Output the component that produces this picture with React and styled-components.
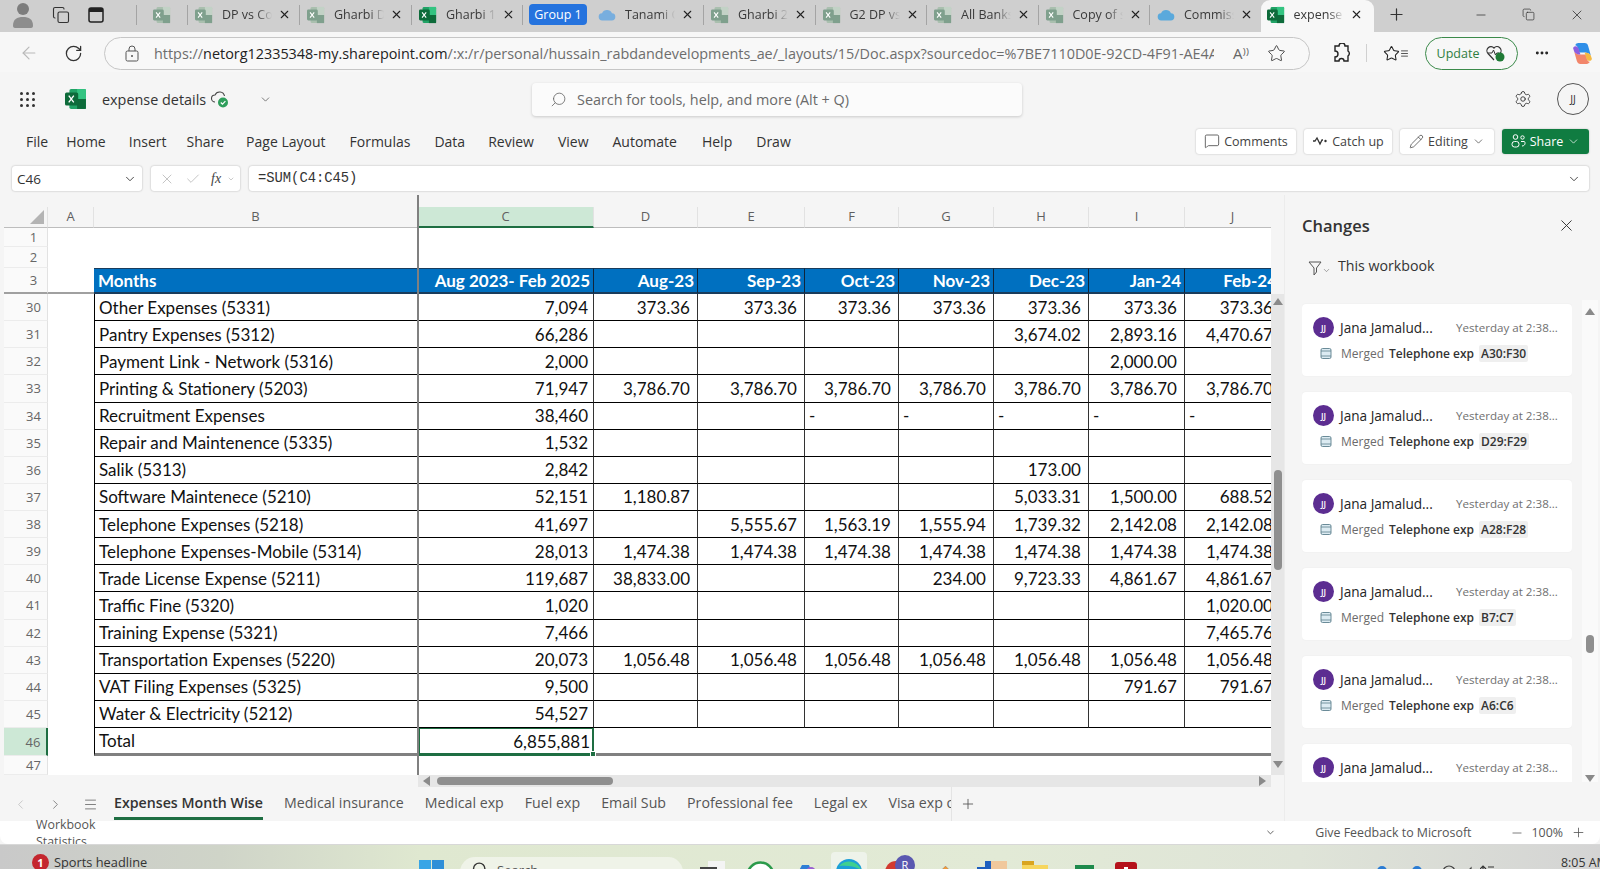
import React from "react";
import styled, { createGlobalStyle } from "styled-components";
import {
  ArrowLeft,
  RotateCw,
  Star,
  Settings,
  X,
  Plus,
  Minus,
  ChevronDown,
  ChevronLeft,
  ChevronRight,
  MessageSquare,
  Pencil,
  Search,
  Menu,
  Copy,
  MoreHorizontal,
  Check,
} from "lucide-react";

const GlobalStyle = createGlobalStyle`
  html, body {
    margin: 0;
    padding: 0;
    background: #f5f5f5;
  }
  * {
    box-sizing: border-box;
  }
  body {
    font-family: "Open Sans", "Noto Sans", sans-serif;
    color: #242424;
  }
`;

const Page = styled.div`
  width: 1600px;
  height: 869px;
  overflow: hidden;
  display: flex;
  flex-direction: column;
`;

/* browser tab strip */
const TabStrip = styled.div`
  height: 32px;
  flex: none;
  display: flex;
  align-items: center;
  background: #cfcfcf;
  padding-bottom: 3px;
`;

const StripTools = styled.div`
  width: 137px;
  flex: none;
  display: flex;
  align-items: center;
  color: #333;
  height: 20px;
  border-right: 1px solid #a4a4a4;
`;

const ProfileDot = styled.svg`
  width: 24px;
  height: 28px;
  margin-left: 11px;
  margin-right: 17px;
`;

const TabBox = styled.svg`
  width: 18px;
  height: 18px;
  margin-left: 17px;
`;

const Tab = styled.div`
  width: ${(p) => p.$w || 111.5}px;
  flex: none;
  height: 20px;
  display: flex;
  align-items: center;
  padding-left: ${(p) => p.$pad || 7}px;
  border-right: ${(p) => (p.$noLine ? "none" : "1px solid #a4a4a4")};
  font-size: 12.5px;
  color: #3a3a3a;
`;

const ActiveTab = styled.div`
  width: 113px;
  flex: none;
  height: 32px;
  margin-bottom: -3px;
  margin-left: -1px;
  display: flex;
  align-items: center;
  padding: 0 0 3px 6px;
  background: #f7f7f7;
  border-radius: 9px 9px 0 0;
  font-size: 12.5px;
  color: #3a3a3a;
`;

const TabTitle = styled.span`
  width: 50px;
  margin-left: 9px;
  overflow: hidden;
  white-space: nowrap;
  -webkit-mask-image: linear-gradient(to right, #000 70%, transparent 100%);
  mask-image: linear-gradient(to right, #000 70%, transparent 100%);
`;

const TabClose = styled(X)`
  width: 13px;
  height: 13px;
  margin-left: 6px;
  color: #222;
  flex: none;
`;

const TabGroup = styled.div`
  position: relative;
  display: flex;
  align-items: center;
  flex: none;
`;

const GroupLine = styled.div`
  position: absolute;
  top: -6px;
  left: 6px;
  right: 8px;
  height: 2px;
  background: #2b6fd6;
`;

const GroupPill = styled.div`
  width: 58px;
  height: 21px;
  margin: 0 4px 0 6px;
  border-radius: 4px;
  background: #2573de;
  color: #fff;
  font-size: 12.5px;
  line-height: 21px;
  text-align: center;
`;

const NewTab = styled(Plus)`
  width: 19px;
  height: 19px;
  margin-left: 13px;
  color: #333;
`;

const WindowButtons = styled.div`
  margin-left: auto;
  display: flex;
  align-items: center;
  gap: 34px;
  padding-right: 15px;
  color: #333;
`;

/* address bar */
const AddressRow = styled.div`
  height: 40px;
  flex: none;
  display: flex;
  align-items: center;
  background: #f7f7f7;
  padding: 2px 0 0 19px;
  color: #333;
`;

const UrlPill = styled.div`
  width: 1206px;
  height: 33px;
  margin-left: 21px;
  border: 1px solid #c6c6c6;
  border-radius: 17px;
  display: flex;
  align-items: center;
  padding: 0 14px 0 20px;
  background: #f8f8f8;
`;

const UrlText = styled.div`
  margin-left: 15px;
  font-size: 14.4px;
  color: #6d6d6d;
  white-space: nowrap;
  width: 1060px;
  overflow: hidden;

  b {
    font-weight: 400;
    color: #222;
  }
`;

const ReadAloud = styled.span`
  margin-left: 19px;
  font-size: 15px;
  color: #666;
  width: 22px;
`;

const BarIcons = styled.div`
  display: flex;
  align-items: center;
  margin-left: 23px;
`;

const BarDivider = styled.div`
  width: 1px;
  height: 18px;
  background: #d0d0d0;
  margin: 0 16px 0 15px;
`;

const UpdatePill = styled.div`
  width: 93px;
  height: 33px;
  margin-left: 16px;
  border: 1px solid #3b8a4a;
  border-radius: 17px;
  display: flex;
  align-items: center;
  justify-content: center;
  gap: 7px;
  font-size: 12.5px;
  color: #2f7d3f;
`;

/* excel header */
const AppHeader = styled.div`
  height: 48px;
  flex: none;
  display: flex;
  align-items: center;
  position: relative;
  padding: 6px 0 0 20px;
  font-size: 14.5px;
`;

const Waffle = styled.div`
  display: grid;
  grid-template-columns: repeat(3, 3px);
  gap: 3px;
  margin-right: 30px;

  i {
    width: 3px;
    height: 3px;
    background: #333;
    border-radius: 50%;
  }
`;

const DocName = styled.span`
  margin-left: 15px;
  width: 107px;
  white-space: nowrap;
  font-size: 14.4px;
  color: #333;
`;

const SearchBox = styled.div`
  position: absolute;
  left: 532px;
  top: 11px;
  width: 490px;
  height: 33px;
  background: #fbfbfb;
  border-radius: 4px;
  box-shadow: 0 1px 3px rgba(0, 0, 0, 0.18);
  display: flex;
  align-items: center;
  gap: 10px;
  padding-left: 18px;
  font-size: 14.4px;
  color: #6a6a6a;
`;

const HeaderRight = styled.div`
  margin-left: auto;
  display: flex;
  align-items: center;
  gap: 25px;
  padding-right: 11px;
`;

const Persona = styled.div`
  width: 32px;
  height: 32px;
  border: 1px solid #555;
  border-radius: 50%;
  font-size: 10.5px;
  color: #333;
  display: flex;
  align-items: center;
  justify-content: center;
`;

/* ribbon tabs */
const MenuRow = styled.div`
  height: 40px;
  flex: none;
  display: flex;
  align-items: center;
  padding: 2px 11px 0 26px;
  font-size: 14px;
  color: #333;
`;

const MenuItem = styled.span`
  margin-right: ${(p) => p.$gap}px;
`;

const RibbonButtons = styled.div`
  margin-left: auto;
  display: flex;
  gap: 8px;
`;

const RibbonButton = styled.div`
  width: ${(p) => p.$w}px;
  height: 25px;
  display: flex;
  align-items: center;
  justify-content: center;
  gap: 4px;
  border-radius: 3px;
  font-size: 12.5px;
  background: ${(p) => (p.$primary ? "#107c41" : "#fff")};
  color: ${(p) => (p.$primary ? "#fff" : "#424242")};
  box-shadow: 0 0 2px rgba(0, 0, 0, 0.25);
`;

/* formula bar */
const FormulaRow = styled.div`
  height: 25px;
  margin-top: 6px;
  flex: none;
  display: flex;
  padding: 0 11px 0 12px;
  gap: 9px;
`;

const Field = styled.div`
  width: ${(p) => (p.$w ? `${p.$w}px` : "auto")};
  flex: ${(p) => (p.$w ? "none" : "1")};
  height: 25px;
  background: #fff;
  border-radius: 3px;
  box-shadow: 0 0 2px rgba(0, 0, 0, 0.3);
  display: flex;
  align-items: center;
  padding: 0 5px;
  font-size: 13.5px;
  color: #333;
  justify-content: space-between;
`;

const FormulaText = styled.span`
  font-family: "Liberation Mono", monospace;
  font-size: 13.8px;
  padding-left: 4px;
`;

const FxButtons = styled.div`
  display: flex;
  align-items: center;
  gap: 10px;
  padding-left: 3px;
  color: #b5b5b5;
`;

const Fx = styled.span`
  font-family: "Liberation Serif", serif;
  font-style: italic;
  color: #444;
  font-size: 14px;
`;

/* work area */
const WorkArea = styled.div`
  display: flex;
  height: 626px;
  margin-top: 4px;
  flex: none;
`;

const SheetColumn = styled.div`
  width: 1284px;
  flex: none;
  display: flex;
  flex-direction: column;
`;

const GridWrap = styled.div`
  height: 580px;
  display: flex;
  flex: none;
`;

const Sheet = styled.div`
  position: relative;
  width: 1271px;
  height: 580px;
  overflow: hidden;
  padding-top: 12px;
  flex: none;
`;

const FreezeLine = styled.div`
  position: absolute;
  left: 417px;
  top: 0;
  bottom: 0;
  width: 2px;
  background: #808080;
`;

const Columns = "44px 46px 324px 176px 104px 107px 94px 95px 95px 96px 96px";

const Row = styled.div`
  display: grid;
  grid-template-columns: ${Columns};
  width: 1277px;
  margin-left: 4px;
  height: ${(p) => p.$h}px;
  background: #fff;
`;

const HeaderRow = styled(Row)`
  background: #f5f5f5;
  margin-left: 0;
  padding-left: 4px;
  width: 1281px;
`;

const ColHead = styled.div`
  font-size: 13px;
  color: #5f5f5f;
  text-align: center;
  line-height: 19px;
  border-right: 1px solid #e2e2e2;
  border-bottom: ${(p) => (p.$on ? "2px solid #1e6e42" : "1px solid #bdbdbd")};
  background: ${(p) => (p.$on ? "#cde8d6" : "transparent")};
  position: relative;
`;

const Corner = styled.svg`
  position: absolute;
  right: 3px;
  bottom: 3px;
  width: 14px;
  height: 14px;
`;

const RowHead = styled.div`
  font-size: 13px;
  color: #666;
  display: flex;
  align-items: center;
  justify-content: center;
  padding-left: 16px;
  background: ${(p) => (p.$on ? "#cde8d6" : "#fafafa")};
  border-right: ${(p) => (p.$on ? "2px solid #1e6e42" : "1px solid #e2e2e2")};
  border-bottom: ${(p) => (p.$freeze ? "2px solid #a0a0a0" : "1px solid #ececec")};
`;

const BlankCell = styled.div`
  border-bottom: ${(p) => (p.$freeze ? "2px solid #a0a0a0" : "none")};
`;

const Banner = styled.div`
  background: #0070c0;
  color: #fff;
  font-family: Lato, "Open Sans", sans-serif;
  font-weight: 700;
  font-size: 17px;
  white-space: nowrap;
  display: flex;
  align-items: flex-end;
  justify-content: ${(p) => (p.$left ? "flex-start" : "flex-end")};
  padding: 0 3px 1px 4px;
  border-top: 1px solid #1a3c5c;
  border-bottom: 2px solid #1a3c5c;
  border-right: 1px solid #10253a;
`;

const Cell = styled.div`
  font-family: Lato, "Open Sans", sans-serif;
  font-size: 17px;
  color: #111;
  white-space: nowrap;
  display: flex;
  align-items: center;
  justify-content: ${(p) => (p.$right ? "flex-end" : "flex-start")};
  padding: ${(p) => (p.$right ? `0 ${p.$pad}px 0 0` : "0 0 0 4px")};
  border-right: 1px solid #333;
  border-bottom: 1px solid #000;
`;

const LabelCell = styled(Cell)`
  border-left: 1px solid #000;
`;

const TotalCell = styled(Cell)`
  border-right: ${(p) => (p.$open ? "none" : "1px solid #333")};
  border-bottom: 3px solid #808080;
`;

const SelectedCell = styled(Cell)`
  position: relative;
  border: 2px solid #1e6e42;
  border-top-width: 1px;
  border-bottom-width: 3px;
  padding-right: 2px;
`;

const Handle = styled.div`
  position: absolute;
  right: -4px;
  bottom: -4px;
  width: 6px;
  height: 6px;
  background: #1e6e42;
  border: 1px solid #fff;
`;

const VScroll = styled.div`
  width: 13px;
  flex: none;
  margin-top: 99px;
  background: #e6e6e6;
  display: flex;
  flex-direction: column;
  align-items: center;
  padding-top: 4px;
`;

const Arrow = styled.div`
  width: 0;
  height: 0;
  border-left: 5px solid transparent;
  border-right: 5px solid transparent;
  border-${(p) => (p.$down ? "top" : "bottom")}: 7px solid #8a8a8a;
`;

const VThumb = styled.div`
  width: 8px;
  height: 100px;
  margin: 165px 0 191px;
  border-radius: 4px;
  background: #8f8f8f;
`;

const HScroll = styled.div`
  height: 12px;
  flex: none;
  margin-left: 418px;
  width: 853px;
  background: #e6e6e6;
  display: flex;
  align-items: center;
  padding: 0 5px;
`;

const SideArrow = styled.div`
  width: 0;
  height: 0;
  border-top: 5px solid transparent;
  border-bottom: 5px solid transparent;
  border-${(p) => (p.$right ? "left" : "right")}: 7px solid #8a8a8a;
  margin-left: ${(p) => (p.$right ? "auto" : "0")};
`;

const HThumb = styled.div`
  width: 176px;
  height: 8px;
  margin-left: 7px;
  border-radius: 4px;
  background: #8f8f8f;
`;

const SheetTabs = styled.div`
  flex: 1;
  display: flex;
  align-items: stretch;
  font-size: 14.2px;
  color: #555;
`;

const TabNav = styled.div`
  width: 114px;
  flex: none;
  display: flex;
  align-items: center;
  padding-left: 13px;
  gap: 20px;
  color: #666;
`;

const TabsClip = styled.div`
  width: 838px;
  flex: none;
  display: flex;
  gap: 21px;
  overflow: hidden;
  white-space: nowrap;
  border-right: 1px solid #e4e4e4;
`;

const SheetTab = styled.div`
  flex: none;
  line-height: 32px;
  height: 33px;
  font-weight: ${(p) => (p.$active ? 600 : 400)};
  color: ${(p) => (p.$active ? "#333" : "#555")};
  border-bottom: ${(p) => (p.$active ? "3px solid #1e6e42" : "none")};
`;

const AddSheet = styled(Plus)`
  width: 16px;
  height: 16px;
  align-self: center;
  margin-left: 8px;
  color: #555;
`;

/* changes pane */
const Pane = styled.aside`
  width: 316px;
  flex: none;
  border-left: 1px solid #ececec;
  padding: 15px 0 0 17px;
  display: flex;
  flex-direction: column;
`;

const PaneTitle = styled.div`
  display: flex;
  justify-content: space-between;
  align-items: center;
  padding-right: 24px;
  font-size: 16.5px;
  font-weight: 600;
  color: #333;
  height: 30px;
`;

const FilterRow = styled.div`
  display: flex;
  align-items: center;
  height: 24px;
  margin: 16px 0 0 6px;
  font-size: 14.2px;
  color: #333;
`;

const FilterLabel = styled.span`
  margin-left: 7px;
  padding-bottom: 6px;
  font-weight: 500;
`;

const PaneBody = styled.div`
  margin-top: 26px;
  height: 482px;
  display: flex;
  gap: 10px;
  margin-top: 20px;
`;

const CardList = styled.div`
  width: 270px;
  flex: none;
  height: 482px;
  overflow: hidden;
  padding-top: 4px;
`;

const Card = styled.div`
  height: 72px;
  margin-bottom: 16px;
  padding: 13px 13px 0 11px;
  background: #fff;
  border-radius: 4px;
  box-shadow: 0 0 2px rgba(0, 0, 0, 0.06);
`;

const CardHead = styled.div`
  display: flex;
  align-items: center;
  height: 21px;
`;

const Avatar = styled.div`
  width: 21px;
  height: 21px;
  border-radius: 50%;
  background: #5c2d91;
  color: #fff;
  font-size: 8.5px;
  font-weight: 600;
  display: flex;
  align-items: center;
  justify-content: center;
  flex: none;
`;

const Author = styled.span`
  margin-left: 6px;
  font-size: 13.6px;
  color: #242424;
  width: 116px;
  white-space: nowrap;
  font-weight: 500;
`;

const When = styled.span`
  font-size: 11.6px;
  color: #707070;
  white-space: nowrap;
`;

const CardLine = styled.div`
  display: flex;
  align-items: center;
  margin-top: 6px;
  padding-left: 7px;
  height: 18px;
  font-size: 12px;
  white-space: nowrap;
  color: #6b6b6b;
`;

const MergeIcon = styled.svg`
  width: 12px;
  height: 13px;
  margin-right: 9px;
  flex: none;
`;

const SheetName = styled.b`
  font-weight: 600;
  color: #333;
  margin: 0 5px 0 5px;
`;

const RangeChip = styled.span`
  background: #efefef;
  color: #333;
  font-weight: 600;
  padding: 0 2px;
  border-radius: 2px;
`;

const PaneScroll = styled.div`
  width: 16px;
  flex: none;
  height: 482px;
  background: #fafafa;
  display: flex;
  flex-direction: column;
  align-items: center;
  padding-top: 8px;
`;

const PaneThumb = styled.div`
  width: 8px;
  height: 18px;
  margin: 320px 0 122px;
  border-radius: 4px;
  background: #8f8f8f;
`;

/* status bar */
const StatusBar = styled.div`
  height: 23px;
  flex: none;
  background: #fff;
  border-radius: 0 0 8px 8px;
  display: flex;
  align-items: center;
  padding: 0 14px 0 36px;
  font-size: 12.4px;
  color: #555;
`;

const StatusCaret = styled(ChevronDown)`
  width: 11px;
  height: 11px;
  margin-left: 1116px;
  color: #555;
`;

const Feedback = styled.span`
  margin-left: 39px;
  width: 195px;
`;

const Zoom = styled.div`
  display: flex;
  align-items: center;
  gap: 8px;
`;

/* windows taskbar */
const Taskbar = styled.div`
  flex: 1;
  border-top: 1px solid #d8d8d8;
  overflow: hidden;
  display: flex;
  align-items: flex-start;
  background: linear-gradient(
    to right,
    #c9c9c9 0,
    #cfd4c8 220px,
    #dfe8d0 420px,
    #e2ead6 1000px,
    #dfe4d8 1300px,
    #d4d4d4 1600px
  );
`;

const Headline = styled.div`
  position: relative;
  width: 419px;
  flex: none;
  padding: 8px 0 0 54px;
  font-size: 12.8px;
  color: #333;
  white-space: nowrap;
`;

const Badge = styled.div`
  position: absolute;
  left: 32px;
  top: 9px;
  width: 17px;
  height: 17px;
  border-radius: 50%;
  background: #c4262e;
  color: #fff;
  font-size: 11px;
  font-weight: 700;
  text-align: center;
  line-height: 17px;
`;

const TaskIcon = styled.svg`
  flex: none;
  width: ${(p) => p.$w}px;
  height: 30px;
  margin-left: ${(p) => p.$ml}px;
  margin-top: ${(p) => p.$mt}px;
`;

const TaskSearch = styled.div`
  flex: none;
  width: 223px;
  height: 30px;
  margin: 12px 0 0 16px;
  border-radius: 15px;
  background: #eff3e8;
  display: flex;
  align-items: flex-start;
  position: relative;
  padding: 4px 0 0 10px;
  gap: 10px;
  font-size: 13px;
  color: #555;
`;

const Clock = styled.div`
  margin-left: 67px;
  padding-top: 9px;
  font-size: 12.4px;
  color: #333;
  white-space: nowrap;
`;

function XlIcon({ faded, size = 18 }) {
  const main = faded ? "#a9bfae" : "#21a366";
  const dark = faded ? "#7fa08d" : "#0d6b3a";
  return (
    <svg width={size} height={size} viewBox="0 0 20 20" style={{ flex: "none" }}>
      <rect x="4" y="1" width="15" height="18" rx="1.5" fill={main} />
      <rect x="11" y="1" width="8" height="9" fill={faded ? "#c2d2c6" : "#33c481"} />
      <rect x="11" y="10" width="8" height="9" fill={dark} />
      <rect x="0" y="4" width="12" height="12" rx="1.5" fill={dark} />
      <path d="M3.4 7l4.6 6M8 7l-4.6 6" stroke="#fff" strokeWidth="1.2" />
    </svg>
  );
}

function CloudIcon({ color = "#78aede" }) {
  return (
    <svg width="18" height="18" viewBox="0 0 20 20" style={{ flex: "none" }}>
      <path d="M5 16a4 4 0 0 1-.5-8A6 6 0 0 1 15.5 8 4 4 0 0 1 15 16z" fill={color} />
    </svg>
  );
}

function CopilotIcon() {
  return (
    <svg width="25" height="25" viewBox="0 0 24 24" style={{ marginLeft: 20 }}>
      <path d="M8 2h6c2 0 3 1 3.500 3L20 14c-2-3-5-3-7-3H9L8 8C7.500 5 6 4 5 4c.7-1.300 1.600-2 3-2z" fill="#2f8fe8" />
      <path d="M16 22h-6c-2 0-3-1-3.500-3L4 10c2 3 5 3 7 3h4l1 3c.5 3 2 4 3 4-.7 1.300-1.600 2-3 2z" fill="#f2866b" />
      <path d="M5 5c2 0 3 1 3.500 3L10 13c-3 0-5-1-6-3L3 7c0-1 1-2 2-2z" fill="#8d5fe0" />
      <path d="M19 19c-2 0-3-1-3.500-3L14 11c3 0 5 1 6 3l1 3c0 1-1 2-2 2z" fill="#f5b942" />
    </svg>
  );
}

function SyncedIcon() {
  return (
    <svg width="20" height="20" viewBox="0 0 20 20" style={{ marginLeft: 1 }}>
      <path d="M5 13a3.500 3.500 0 0 1 0-7 5 5 0 0 1 9.500 1" fill="none" stroke="#444" strokeWidth="1.100" />
      <circle cx="13" cy="13.500" r="5" fill="#2e9e5b" />
      <path d="M10.800 13.500l1.700 1.700 2.900-3" fill="none" stroke="#fff" strokeWidth="1.200" />
    </svg>
  );
}

const menu = [
  ["File", 18],
  ["Home", 23],
  ["Insert", 20],
  ["Share", 22],
  ["Page Layout", 24],
  ["Formulas", 24],
  ["Data", 23],
  ["Review", 24],
  ["View", 24],
  ["Automate", 25],
  ["Help", 24],
  ["Draw", 0],
];

const headers = ["Aug 2023- Feb 2025", "Aug-23", "Sep-23", "Oct-23", "Nov-23", "Dec-23", "Jan-24", "Feb-24"];

const all = (v) => [v, v, v, v, v, v, v];
const rows = [
  [30, "Other Expenses (5331)", "7,094", all("373.36")],
  [31, "Pantry Expenses (5312)", "66,286", ["", "", "", "", "3,674.02", "2,893.16", "4,470.67"]],
  [32, "Payment Link - Network (5316)", "2,000", ["", "", "", "", "", "2,000.00", ""]],
  [33, "Printing & Stationery (5203)", "71,947", all("3,786.70")],
  [34, "Recruitment Expenses", "38,460", ["", "", "-", "-", "-", "-", "-"]],
  [35, "Repair and Maintenence (5335)", "1,532", ["", "", "", "", "", "", ""]],
  [36, "Salik (5313)", "2,842", ["", "", "", "", "173.00", "", ""]],
  [37, "Software Maintenece (5210)", "52,151", ["1,180.87", "", "", "", "5,033.31", "1,500.00", "688.52"]],
  [38, "Telephone Expenses (5218)", "41,697", ["", "5,555.67", "1,563.19", "1,555.94", "1,739.32", "2,142.08", "2,142.08"]],
  [39, "Telephone Expenses-Mobile (5314)", "28,013", all("1,474.38")],
  [40, "Trade License Expense (5211)", "119,687", ["38,833.00", "", "", "234.00", "9,723.33", "4,861.67", "4,861.67"]],
  [41, "Traffic Fine (5320)", "1,020", ["", "", "", "", "", "", "1,020.00"]],
  [42, "Training Expense (5321)", "7,466", ["", "", "", "", "", "", "7,465.76"]],
  [43, "Transportation Expenses (5220)", "20,073", all("1,056.48")],
  [44, "VAT Filing Expenses (5325)", "9,500", ["", "", "", "", "", "791.67", "791.67"]],
  [45, "Water & Electricity (5212)", "54,527", ["", "", "", "", "", "", ""]],
];

const changes = ["A30:F30", "D29:F29", "A28:F28", "B7:C7", "A6:C6"];
const sheets = ["Expenses Month Wise", "Medical insurance", "Medical exp", "Fuel exp", "Email Sub", "Professional fee", "Legal ex", "Visa exp other"];

export default function App() {
  return (
    <Page>
      <GlobalStyle />
      <TabStrip>
        <StripTools>
          <ProfileDot viewBox="0 0 24 28">
            <circle cx="12" cy="8" r="6" fill="#7d7d7d" />
            <path d="M2 25c0-7 4-9 10-9s10 2 10 9c0 1-1 2-2 2H4c-1 0-2-1-2-2z" fill="#8d8d8d" />
          </ProfileDot>
          <Copy size={18} strokeWidth={1.5} />
          <TabBox viewBox="0 0 18 18">
            <rect x="2" y="2" width="14" height="14" rx="2" fill="none" stroke="#222" strokeWidth="1.500" />
            <rect x="2" y="2" width="14" height="4" fill="#222" />
          </TabBox>
        </StripTools>
        <Tab $w={51} $pad={16}>
          <XlIcon faded />
        </Tab>
        {["DP vs Compare", "Gharbi Details"].map((t) => (
          <Tab key={t} $w={112}>
            <XlIcon faded />
            <TabTitle>{t}</TabTitle>
            <TabClose />
          </Tab>
        ))}
        <Tab $w={111}>
          <XlIcon />
          <TabTitle>Gharbi 1 sheet</TabTitle>
          <TabClose />
        </Tab>
        <TabGroup>
          <GroupLine />
          <GroupPill>Group 1</GroupPill>
          <Tab $w={113}>
            <CloudIcon />
            <TabTitle>Tanami Cost</TabTitle>
            <TabClose />
          </Tab>
        </TabGroup>
        {["Gharbi 2 sheet", "G2 DP vs Cost", "All Banks data", "Copy of sheet"].map((t) => (
          <Tab key={t}>
            <XlIcon faded />
            <TabTitle>{t}</TabTitle>
            <TabClose />
          </Tab>
        ))}
        <Tab $noLine>
          <CloudIcon color="#5aa9dc" />
          <TabTitle>Commission</TabTitle>
          <TabClose />
        </Tab>
        <ActiveTab>
          <XlIcon />
          <TabTitle>expense details</TabTitle>
          <TabClose />
        </ActiveTab>
        <NewTab strokeWidth={1.5} />
        <WindowButtons>
          <Minus size={14} strokeWidth={1.3} />
          <Copy size={13} strokeWidth={1.3} />
          <X size={16} strokeWidth={1.2} />
        </WindowButtons>
      </TabStrip>

      <AddressRow>
        <ArrowLeft size={20} strokeWidth={1.4} color="#b9b9b9" />
        <RotateCw size={19} strokeWidth={1.6} style={{ marginLeft: 25 }} />
        <UrlPill>
          <svg width="14" height="17" viewBox="0 0 14 17">
            <rect x="1" y="6" width="12" height="10" rx="1.500" fill="none" stroke="#555" />
            <path d="M4 6V4a3 3 0 0 1 6 0v2" fill="none" stroke="#555" />
            <circle cx="7" cy="11" r="1" fill="#555" />
          </svg>
          <UrlText>
            https://<b>netorg12335348-my.sharepoint.com</b>/:x:/r/personal/hussain_rabdandevelopments_ae/_layouts/15/Doc.aspx?sourcedoc=%7BE7110D0E-92CD-4F91-AE4A-DE...
          </UrlText>
          <ReadAloud>A⁾⁾</ReadAloud>
          <Star size={19} strokeWidth={1.2} color="#444" style={{ marginLeft: 12 }} />
        </UrlPill>
        <BarIcons>
          <svg width="18" height="20" viewBox="0 0 18 20">
            <path d="M6 3a3 3 0 0 1 6 0h3v5a3 3 0 0 1 0 5v5h-4a2.500 2.500 0 0 0-5 0H2v-4a3 3 0 0 0 0-6V3z" fill="none" stroke="#222" strokeWidth="1.400" />
          </svg>
          <BarDivider />
          <Star size={17} strokeWidth={1.5} color="#222" />
          <Menu size={9} strokeWidth={2} color="#222" />
        </BarIcons>
        <UpdatePill>
          Update
          <svg width="20" height="18" viewBox="0 0 20 18">
            <path d="M8 16L2 9.500A4 4 0 0 1 8 4a4 4 0 0 1 6 5.500" fill="none" stroke="#333" strokeWidth="1.200" />
            <path d="M2 9h4l1.500-3 2 5 1.200-2H13" fill="none" stroke="#333" strokeWidth="1" />
            <circle cx="14" cy="13" r="4.500" fill="#1f7a35" />
          </svg>
        </UpdatePill>
        <MoreHorizontal size={16} strokeWidth={2.4} color="#222" style={{ marginLeft: 16 }} />
        <CopilotIcon />
      </AddressRow>

      <AppHeader>
        <Waffle>
          {[...Array(9)].map((_, i) => (
            <i key={i} />
          ))}
        </Waffle>
        <XlIcon size={22} />
        <DocName>expense details</DocName>
        <SyncedIcon />
        <ChevronDown size={13} strokeWidth={1.4} color="#555" style={{ marginLeft: 29 }} />
        <SearchBox>
          <Search size={17} strokeWidth={1.2} style={{ transform: "scaleX(-1)" }} />
          Search for tools, help, and more (Alt + Q)
        </SearchBox>
        <HeaderRight>
          <Settings size={18} strokeWidth={1.2} color="#333" />
          <Persona>JJ</Persona>
        </HeaderRight>
      </AppHeader>

      <MenuRow>
        {menu.map(([label, gap]) => (
          <MenuItem key={label} $gap={gap}>
            {label}
          </MenuItem>
        ))}
        <RibbonButtons>
          <RibbonButton $w={100}>
            <MessageSquare size={16} strokeWidth={1.2} />
            Comments
          </RibbonButton>
          <RibbonButton $w={88}>
            <svg width="16" height="10" viewBox="0 0 16 10">
              <path d="M1 5h2l2-3 3 6 2-4h1" fill="none" stroke="#333" strokeWidth="1.300" />
              <circle cx="13.500" cy="5" r="1.200" fill="#333" />
            </svg>
            Catch up
          </RibbonButton>
          <RibbonButton $w={94}>
            <Pencil size={15} strokeWidth={1.2} />
            Editing
            <ChevronDown size={13} strokeWidth={1.3} />
          </RibbonButton>
          <RibbonButton $w={87} $primary>
            <svg width="15" height="14" viewBox="0 0 15 14">
              <circle cx="4.500" cy="3" r="2.300" fill="none" stroke="#fff" />
              <circle cx="11.500" cy="3.500" r="1.700" fill="none" stroke="#fff" />
              <rect x="1" y="7.500" width="7" height="5.500" rx="2.500" fill="none" stroke="#fff" />
              <path d="M10 7.500h3c1 0 1 1 1 2s-1 2.500-3 2.500" fill="none" stroke="#fff" />
            </svg>
            Share
            <ChevronDown size={13} strokeWidth={1.3} />
          </RibbonButton>
        </RibbonButtons>
      </MenuRow>

      <FormulaRow>
        <Field $w={130}>
          C46
          <ChevronDown size={14} strokeWidth={1.5} />
        </Field>
        <Field $w={89}>
          <FxButtons>
            <X size={16} strokeWidth={1.2} />
            <Check size={16} strokeWidth={1.2} />
            <Fx>fx</Fx>
          </FxButtons>
          <ChevronDown size={8} strokeWidth={1.5} color="#999" />
        </Field>
        <Field>
          <FormulaText>=SUM(C4:C45)</FormulaText>
          <ChevronDown size={14} strokeWidth={1.5} style={{ marginRight: 3 }} />
        </Field>
      </FormulaRow>

      <WorkArea>
        <SheetColumn>
          <GridWrap>
            <Sheet>
              <HeaderRow $h={20}>
                <ColHead>
                  <Corner viewBox="0 0 14 14">
                    <polygon points="14,0 14,14 0,14" fill="#b4b4b4" />
                  </Corner>
                </ColHead>
                {"ABCDEFGHIJ".split("").map((c) => (
                  <ColHead key={c} $on={c === "C"}>
                    {c}
                  </ColHead>
                ))}
              </HeaderRow>
              <Row $h={20}>
                <RowHead>1</RowHead>
              </Row>
              <Row $h={21}>
                <RowHead>2</RowHead>
              </Row>
              <Row $h={26}>
                <RowHead $freeze>3</RowHead>
                <BlankCell $freeze />
                <Banner $left>Months</Banner>
                {headers.map((h) => (
                  <Banner key={h}>{h}</Banner>
                ))}
              </Row>
              {rows.map(([n, label, total, vals]) => (
                <Row key={n} $h={27.125}>
                  <RowHead>{n}</RowHead>
                  <BlankCell />
                  <LabelCell>{label}</LabelCell>
                  <Cell $right $pad={5}>
                    {total}
                  </Cell>
                  {vals.map((v, i) => (
                    <Cell key={i} $right={v !== "-"} $pad={7}>
                      {v}
                    </Cell>
                  ))}
                </Row>
              ))}
              <Row $h={28}>
                <RowHead $on>46</RowHead>
                <BlankCell />
                <TotalCell as={LabelCell} style={{ borderBottom: "3px solid #808080" }}>
                  Total
                </TotalCell>
                <SelectedCell $right $pad={3}>
                  6,855,881
                  <Handle />
                </SelectedCell>
                {[...Array(7)].map((_, i) => (
                  <TotalCell key={i} $open />
                ))}
              </Row>
              <Row $h={19}>
                <RowHead>47</RowHead>
              </Row>
              <FreezeLine />
            </Sheet>
            <VScroll>
              <Arrow />
              <VThumb />
              <Arrow $down />
            </VScroll>
          </GridWrap>
          <HScroll>
            <SideArrow />
            <HThumb />
            <SideArrow $right />
          </HScroll>
          <SheetTabs>
            <TabNav>
              <ChevronLeft size={15} strokeWidth={1.2} color="#bbb" />
              <ChevronRight size={15} strokeWidth={1.2} />
              <Menu size={15} strokeWidth={1.3} />
            </TabNav>
            <TabsClip>
              {sheets.map((s, i) => (
                <SheetTab key={s} $active={i === 0}>
                  {s}
                </SheetTab>
              ))}
            </TabsClip>
            <AddSheet strokeWidth={1.3} />
          </SheetTabs>
        </SheetColumn>

        <Pane>
          <PaneTitle>
            Changes
            <X size={19} strokeWidth={1.2} />
          </PaneTitle>
          <FilterRow>
            <svg width="14" height="15" viewBox="0 0 14 15">
              <path d="M1 1h12L8.500 7v4L6 14V7z" fill="none" stroke="#555" />
            </svg>
            <ChevronDown size={9} strokeWidth={1.5} color="#666" style={{ marginTop: 5 }} />
            <FilterLabel>This workbook</FilterLabel>
          </FilterRow>
          <PaneBody>
            <CardList>
              {[...changes, null].map((range, i) => (
                <Card key={i}>
                  <CardHead>
                    <Avatar>JJ</Avatar>
                    <Author>Jana Jamalud...</Author>
                    <When>Yesterday at 2:38...</When>
                  </CardHead>
                  {range && (
                    <CardLine>
                      <MergeIcon viewBox="0 0 12 13">
                        <rect x="1" y="1.500" width="10" height="10" rx="1.500" fill="#dcebf2" stroke="#5b7f8c" strokeWidth="0.900" />
                        <path d="M1 4h10M1 9h10" stroke="#5b7f8c" strokeWidth="0.800" />
                      </MergeIcon>
                      Merged
                      <SheetName>Telephone exp</SheetName>
                      <RangeChip>{range}</RangeChip>
                    </CardLine>
                  )}
                </Card>
              ))}
            </CardList>
            <PaneScroll>
              <Arrow />
              <PaneThumb />
              <Arrow $down />
            </PaneScroll>
          </PaneBody>
        </Pane>
      </WorkArea>

      <StatusBar>
        Workbook Statistics
        <StatusCaret strokeWidth={2} />
        <Feedback>Give Feedback to Microsoft</Feedback>
        <Zoom>
          <Minus size={14} strokeWidth={1.3} />
          100%
          <Plus size={15} strokeWidth={1.3} />
        </Zoom>
      </StatusBar>

      <Taskbar>
        <Headline>
          <Badge>1</Badge>
          Sports headline
        </Headline>
        <TaskIcon $w={25} $ml={0} $mt={15} viewBox="0 0 25 30">
          <rect width="12" height="12" fill="#38a5e6" />
          <rect x="13" width="12" height="12" fill="#2f8fd8" />
          <rect y="13" width="12" height="12" fill="#2f8fd8" />
          <rect x="13" y="13" width="12" height="12" fill="#1f78c4" />
        </TaskIcon>
        <TaskSearch>
          <Search size={17} strokeWidth={2} color="#333" style={{ transform: "scaleX(-1)" }} />
          Search
        </TaskSearch>
        <TaskIcon $w={25} $ml={17} $mt={16} viewBox="0 0 25 30">
          <rect x="8" width="17" height="14" fill="#f4f4f4" />
          <rect y="6" width="17" height="14" fill="#444" />
        </TaskIcon>
        <TaskIcon $w={29} $ml={21} $mt={16} viewBox="0 0 29 30">
          <circle cx="14.500" cy="14.500" r="13" fill="#fff" stroke="#2a9a4a" strokeWidth="2.500" />
        </TaskIcon>
        <TaskIcon $w={23} $ml={18} $mt={19} viewBox="0 0 23 30">
          <path d="M2 14L9 1h7l5 13z" fill="#2f7fd6" />
          <circle cx="18" cy="8" r="5" fill="#9a5fd0" />
        </TaskIcon>
        <TaskIcon $w={36} $ml={15} $mt={7} viewBox="0 0 36 30">
          <rect width="36" height="30" rx="4" fill="#eef3ea" />
          <circle cx="18" cy="20" r="13" fill="#1c9fd8" />
          <path d="M8 14a13 13 0 0 1 22 4c-6-4-14-5-22-4z" fill="#3fd08f" />
        </TaskIcon>
        <TaskIcon $w={30} $ml={18} $mt={10} viewBox="0 0 30 30">
          <circle cx="11" cy="17" r="11" fill="#d13a2f" />
          <circle cx="20" cy="10" r="10" fill="#5a58b0" />
          <text x="20" y="14" fontSize="11" fill="#fff" textAnchor="middle" fontFamily="Open Sans">R</text>
        </TaskIcon>
        <TaskIcon $w={23} $ml={19} $mt={21} viewBox="0 0 23 30">
          <polygon points="11.500,0 23,11 11.500,22 0,11" fill="#2c78c8" />
          <polygon points="11.500,0 17,5.500 11.500,11 6,5.500" fill="#ef9a3c" />
        </TaskIcon>
        <TaskIcon $w={30} $ml={20} $mt={16} viewBox="0 0 30 30">
          <rect y="6" width="15" height="20" fill="#1d5fbf" />
          <rect x="8" width="6" height="12" fill="#1d5fbf" />
          <rect x="14" width="16" height="14" fill="#f0c89c" />
        </TaskIcon>
        <TaskIcon $w={26} $ml={15} $mt={16} viewBox="0 0 26 30">
          <rect width="12" height="6" fill="#d9a520" />
          <rect y="4" width="26" height="20" fill="#f6d65e" />
        </TaskIcon>
        <TaskIcon $w={25} $ml={21} $mt={20} viewBox="0 0 25 30">
          <rect x="6" width="19" height="20" fill="#1f8a4c" />
          <rect y="4" width="13" height="16" fill="#0d6b3a" />
        </TaskIcon>
        <TaskIcon $w={22} $ml={21} $mt={17} viewBox="0 0 22 30">
          <rect width="22" height="22" rx="3" fill="#b5121b" />
          <rect x="9" y="5" width="4" height="12" fill="#fff" />
        </TaskIcon>
        <TaskIcon $w={10} $ml={240} $mt={21} viewBox="0 0 10 30">
          <circle cx="5" cy="5" r="5" fill="#2b7cd3" />
        </TaskIcon>
        <TaskIcon $w={10} $ml={25} $mt={21} viewBox="0 0 10 30">
          <circle cx="5" cy="5" r="5" fill="#2b7cd3" />
        </TaskIcon>
        <TaskIcon $w={14} $ml={20} $mt={20} viewBox="0 0 14 30">
          <circle cx="7" cy="7" r="6" fill="none" stroke="#444" strokeWidth="1.200" />
        </TaskIcon>
        <TaskIcon $w={12} $ml={6} $mt={20} viewBox="0 0 12 30">
          <path d="M1 8l4-1 4-4v12" fill="none" stroke="#444" strokeWidth="1.200" />
        </TaskIcon>
        <TaskIcon $w={14} $ml={6} $mt={19} viewBox="0 0 14 30">
          <path d="M3 10V3M0 5l3-3 3 3M8 3h6M8 7h6" fill="none" stroke="#333" strokeWidth="1.200" />
        </TaskIcon>
        <Clock>8:05 AM</Clock>
      </Taskbar>
    </Page>
  );
}
